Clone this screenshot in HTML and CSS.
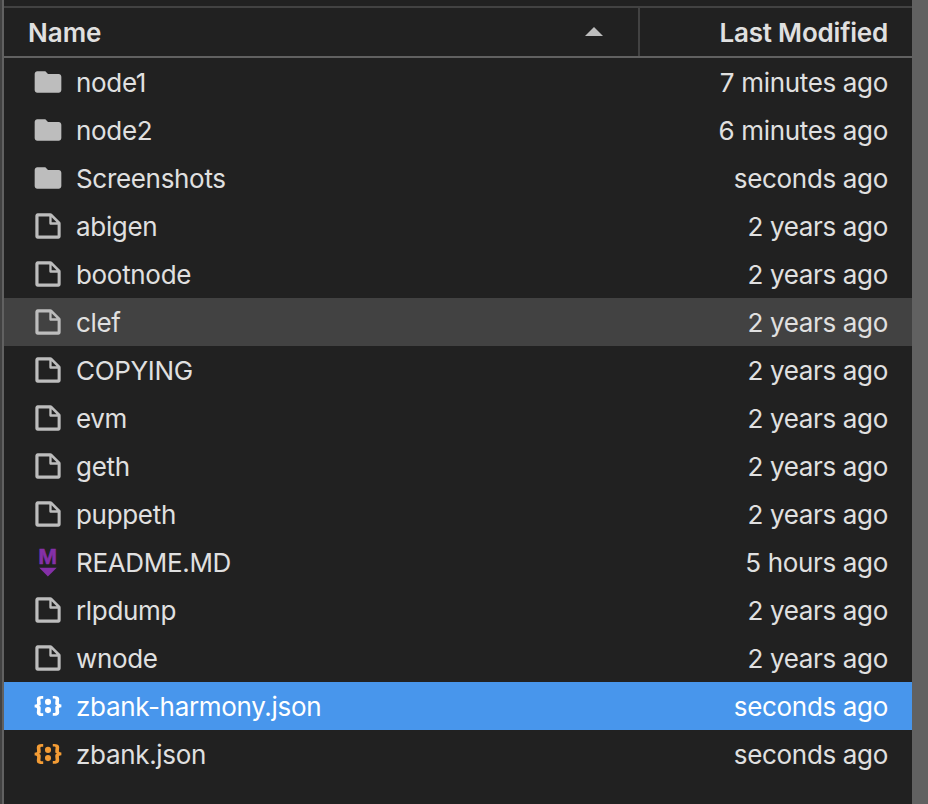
FILE: index.html
```
<!DOCTYPE html>
<html lang="en">
<head>
<meta charset="utf-8">
<title>File browser</title>
<link rel="stylesheet" href="styles.css">
</head>
<body>
<svg class="defs" aria-hidden="true">
  <symbol id="folder" viewBox="0 0 24 24"><path d="M10 4H4c-1.1 0-1.99.9-1.99 2L2 18c0 1.1.9 2 2 2h16c1.1 0 2-.9 2-2V8c0-1.1-.9-2-2-2h-8l-2-2z"/></symbol>
  <symbol id="file" viewBox="0 0 22 22"><path d="M19.3 8.2l-5.5-5.5c-.3-.3-.7-.5-1.2-.5H3.9c-.8.1-1.6.9-1.6 1.8v14.1c0 .9.7 1.6 1.6 1.6h14.2c.9 0 1.6-.7 1.6-1.6V9.4c.1-.5-.1-.9-.4-1.2zm-5.8-3.3l3.4 3.6h-3.4V4.9zm3.9 12.7H4.7c-.1 0-.2 0-.2-.2V4.7c0-.2.1-.3.2-.3h7.2v4.4s0 .8.3 1.1c.3.3 1.1.3 1.1.3h4.3v7.2s-.1.2-.2.2z"/></symbol>
  <symbol id="json" viewBox="0 0 22 22"><path d="M20.2 11.8c-1.6 0-1.7.5-1.7 1 0 .4.1.9.1 1.3.1.5.1.9.1 1.3 0 1.7-1.4 2.3-3.5 2.3h-.9v-1.9h.5c1.1 0 1.4 0 1.4-.8 0-.3 0-.6-.1-1 0-.4-.1-.8-.1-1.2 0-1.3 0-1.8 1.3-2-1.3-.2-1.3-.7-1.3-2 0-.4.1-.8.1-1.2.1-.4.1-.7.1-1 0-.8-.4-.7-1.4-.8h-.5V4.1h.9c2.2 0 3.5.7 3.5 2.3 0 .4-.1.9-.1 1.3-.1.5-.1.9-.1 1.3 0 .5.2 1 1.7 1v1.8zM1.8 10.1c1.6 0 1.7-.5 1.7-1 0-.4-.1-.9-.1-1.3-.1-.5-.1-.9-.1-1.3 0-1.6 1.4-2.3 3.5-2.3h.9v1.9h-.5c-1 0-1.4 0-1.4.8 0 .3 0 .6.1 1 0 .2.1.6.1 1 0 1.3 0 1.8-1.3 2C6 11.2 6 11.7 6 13c0 .4-.1.8-.1 1.2-.1.3-.1.7-.1 1 0 .8.3.8 1.4.8h.5v1.9h-.9c-2.1 0-3.5-.6-3.5-2.3 0-.4.1-.9.1-1.3.1-.5.1-.9.1-1.3 0-.5-.2-1-1.7-1v-1.9z"/><circle cx="11" cy="13.8" r="2.1"/><circle cx="11" cy="8.2" r="2.1"/></symbol>
</svg>
<main class="browser">
  <div class="toolbar-edge"></div>
  <header class="header">
    <div class="header-name"><span>Name</span><svg class="caret" viewBox="0 0 18 9"><path d="M0 9L9 0l9 9z"/></svg></div>
    <div class="header-modified"><span>Last Modified</span></div>
  </header>
  <ul class="listing">
    <li class="row"><svg class="icon"><use href="#folder"/></svg><span class="name">node1</span><span class="time">7 minutes ago</span></li>
    <li class="row"><svg class="icon"><use href="#folder"/></svg><span class="name">node2</span><span class="time">6 minutes ago</span></li>
    <li class="row"><svg class="icon"><use href="#folder"/></svg><span class="name">Screenshots</span><span class="time">seconds ago</span></li>
    <li class="row"><svg class="icon"><use href="#file"/></svg><span class="name">abigen</span><span class="time">2 years ago</span></li>
    <li class="row"><svg class="icon"><use href="#file"/></svg><span class="name">bootnode</span><span class="time">2 years ago</span></li>
    <li class="row hovered"><svg class="icon"><use href="#file"/></svg><span class="name">clef</span><span class="time">2 years ago</span></li>
    <li class="row"><svg class="icon"><use href="#file"/></svg><span class="name">COPYING</span><span class="time">2 years ago</span></li>
    <li class="row"><svg class="icon"><use href="#file"/></svg><span class="name">evm</span><span class="time">2 years ago</span></li>
    <li class="row"><svg class="icon"><use href="#file"/></svg><span class="name">geth</span><span class="time">2 years ago</span></li>
    <li class="row"><svg class="icon"><use href="#file"/></svg><span class="name">puppeth</span><span class="time">2 years ago</span></li>
    <li class="row"><svg class="icon markdown" viewBox="0 0 32 32"><text x="15.7" y="18" text-anchor="middle">M</text><path d="M7.3 21.7h17.4L15.9 30.4z"/></svg><span class="name">README.MD</span><span class="time">5 hours ago</span></li>
    <li class="row"><svg class="icon"><use href="#file"/></svg><span class="name">rlpdump</span><span class="time">2 years ago</span></li>
    <li class="row"><svg class="icon"><use href="#file"/></svg><span class="name">wnode</span><span class="time">2 years ago</span></li>
    <li class="row selected"><svg class="icon"><use href="#json"/></svg><span class="name">zbank-harmony.json</span><span class="time">seconds ago</span></li>
    <li class="row"><svg class="icon json"><use href="#json"/></svg><span class="name">zbank.json</span><span class="time">seconds ago</span></li>
  </ul>
</main>
</body>
</html>
```
FILE: styles.css
```
* { box-sizing: border-box; }
body {
  margin: 0;
  height: 804px;
  overflow: hidden;
  background: #212121;
  color: #e0e0e0;
  font: 430 26px/48px Inter, "Liberation Sans", sans-serif;
}
.defs { display: none; }
.browser {
  height: 804px;
  border-left: 2px solid #424242;
  border-right: 16px solid #616161;
  box-shadow: inset 2px 0 #616161;
  padding-left: 2px;
}
.toolbar-edge { height: 8px; border-bottom: 2px solid #424242; }
.header {
  display: flex;
  height: 50px;
  border-bottom: 2px solid #616161;
  font-weight: 600;
  line-height: 49px;
}
.header-name {
  display: flex;
  flex: 1;
  align-items: center;
  justify-content: space-between;
  padding: 0 35px 0 24px;
}
.caret { width: 18px; height: 9px; margin-top: -2px; fill: #bdbdbd; }
.header-modified {
  width: 274px;
  border-left: 2px solid #424242;
  padding-right: 24px;
  text-align: right;
  letter-spacing: -0.2px;
}
.listing { list-style: none; margin: 0; padding: 0; }
.row {
  display: flex;
  align-items: center;
  height: 48px;
  padding: 0 24px 0 28px;
}
.icon { width: 32px; height: 32px; fill: #bdbdbd; }
.name { flex: 1; margin-left: 12px; padding-top: 2px; letter-spacing: -0.32px; }
.time { padding-top: 2px; letter-spacing: -0.33px; }
.hovered { background: #424242; }
.selected { background: #4896ec; color: #fff; }
.selected .icon { fill: #fff; }
.json { fill: #f39c35; }
.markdown {
  overflow: visible;
  fill: #8530a8;
  font: 700 22.5px "Liberation Sans", sans-serif;
}
.markdown text { stroke: #8530a8; stroke-width: 0.6px; }
```
